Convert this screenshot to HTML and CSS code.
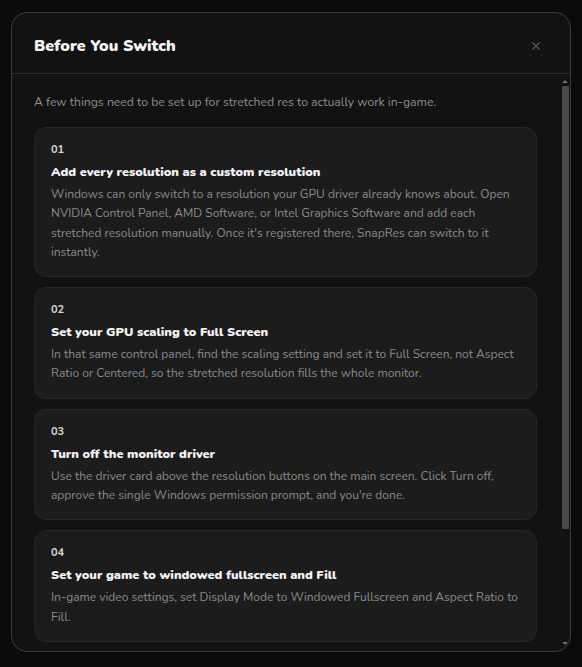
FILE: index.html
```html
<!DOCTYPE html>
<html lang="en">
<head>
    <meta charset="UTF-8">
    <meta name="viewport" content="width=device-width, initial-scale=1.0">
    <title>Before You Switch</title>
    <link rel="stylesheet" href="styles.css">
</head>
<body>
    <div class="overlay">
        <div class="modal">
            <div class="modal-header">
                <h2>Before You Switch</h2>
                <button class="close" aria-label="Close">
                    <svg width="8" height="8" viewBox="0 0 8 8"><path d="M0.5 0.5 L7.5 7.5 M7.5 0.5 L0.5 7.5" stroke="#5c5c5c" stroke-width="1.1" fill="none"/></svg>
                </button>
            </div>
            <div class="modal-body">
                <p class="intro">A few things need to be set up for stretched res to actually work in-game.</p>

                <div class="step">
                    <span class="num">01</span>
                    <h3>Add every resolution as a custom resolution</h3>
                    <p>Windows can only switch to a resolution your GPU driver already knows about. Open NVIDIA Control Panel, AMD Software, or Intel Graphics Software and add each stretched resolution manually. Once it's registered there, SnapRes can switch to it instantly.</p>
                </div>

                <div class="step">
                    <span class="num">02</span>
                    <h3>Set your GPU scaling to Full Screen</h3>
                    <p>In that same control panel, find the scaling setting and set it to Full Screen, not Aspect Ratio or Centered, so the stretched resolution fills the whole monitor.</p>
                </div>

                <div class="step">
                    <span class="num">03</span>
                    <h3>Turn off the monitor driver</h3>
                    <p>Use the driver card above the resolution buttons on the main screen. Click Turn off, approve the single Windows permission prompt, and you're done.</p>
                </div>

                <div class="step">
                    <span class="num">04</span>
                    <h3>Set your game to windowed fullscreen and Fill</h3>
                    <p>In-game video settings, set Display Mode to Windowed Fullscreen and Aspect Ratio to Fill.</p>
                </div>
            </div>
            <!-- drawn scrollbar, the native one is hidden in screenshots -->
            <div class="scrollbar">
                <span class="arrow up"></span>
                <span class="thumb"></span>
                <span class="arrow down"></span>
            </div>
        </div>
    </div>
</body>
</html>
```

FILE: styles.css
```css
* {
    box-sizing: border-box;
}

html, body {
    height: 100%;
}

body {
    margin: 0;
    background-color: #0b0b0b;
    font-family: "Nunito", Lato, "Noto Sans", sans-serif;
    color: #e8e8e8;
    overflow: hidden;
}

.overlay {
    height: 100%;
    padding: 12px 11px 16px 11px;
}

.modal {
    position: relative;
    width: 560px;
    height: 640px;
    background-color: #121212;
    border: 1px solid #3a3a3a;
    border-radius: 16px;
    display: flex;
    flex-direction: column;
    overflow: hidden;
}

.modal-header {
    display: flex;
    align-items: center;
    justify-content: space-between;
    padding: 5px 30px 0 22px;
    height: 61px;
    border-bottom: 1px solid #2a2a2a;
    flex-shrink: 0;
}

.modal-header h2 {
    margin: 0;
    font-size: 16px;
    font-weight: 900;
    color: #f4f4f4;
}

.close {
    background: none;
    border: none;
    padding: 0;
    width: 8px;
    height: 8px;
    cursor: pointer;
    display: flex;
}

.modal-body {
    flex: 1;
    overflow-y: auto;
    padding: 19px 33px 24px 22px;
}

.intro {
    margin: 0 0 16px 0;
    font-size: 12.2px;
    line-height: 18px;
    color: #8e8e8e;
}

.step {
    background-color: #1c1c1c;
    border: 1px solid #262626;
    border-radius: 12px;
    padding: 15px 16px 14px 16px;
    margin-bottom: 10px;
}

.num {
    display: block;
    font-size: 11px;
    font-weight: 700;
    color: #d6d6d6;
    line-height: 14px;
}

.step h3 {
    margin: 6px 0 4px 0;
    font-size: 12.6px;
    font-weight: 900;
    color: #f2f2f2;
    line-height: 18px;
}

.step p {
    margin: 0;
    font-size: 12px;
    line-height: 19.3px;
    color: #8a8a8a;
}

.scrollbar {
    position: absolute;
    top: 65px;
    bottom: 4px;
    right: 1px;
    width: 8px;
    display: flex;
    flex-direction: column;
    align-items: center;
}

.thumb {
    width: 7px;
    height: 443px;
    margin-top: 3px;
    background-color: #4a4a4a;
}

.arrow {
    width: 0;
    height: 0;
    border-left: 3px solid transparent;
    border-right: 3px solid transparent;
}

.arrow.up {
    margin-top: 2px;
    border-bottom: 3px solid #6e6e6e;
}

.arrow.down {
    margin-top: auto;
    margin-bottom: 2px;
    border-top: 3px solid #6e6e6e;
}
```
